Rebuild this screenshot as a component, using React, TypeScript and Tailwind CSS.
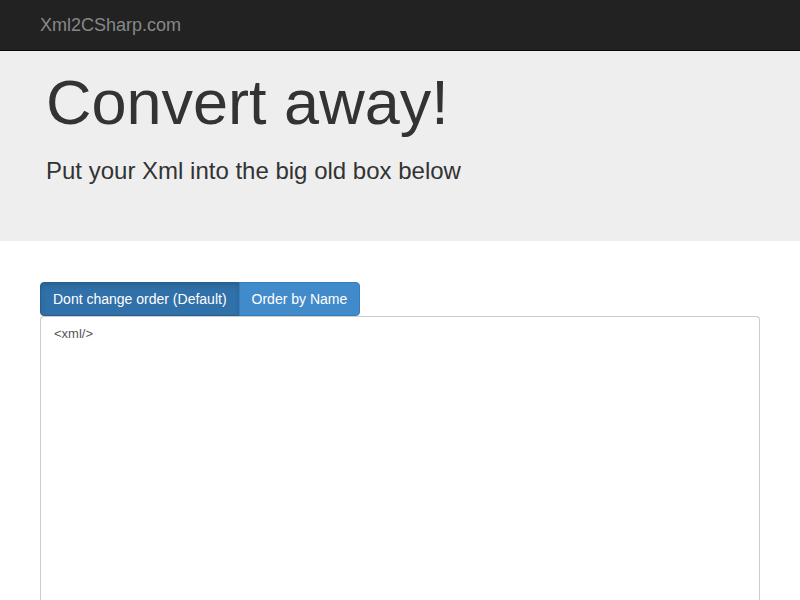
export default function App() {
  return (
    <div className="min-h-[600px] bg-white font-['Liberation_Sans',Arial,sans-serif] text-[#333]">
      <nav className="h-[51px] bg-[#222] border-b border-[#080808]">
        <div className="pl-[40px] pt-[15px] text-[18px] leading-[20px] text-[#888]">Xml2CSharp.com</div>
      </nav>
      <div className="h-[190px] bg-[#eee] pl-[46px] pt-[17px]">
        <h1 className="text-[63px] leading-[69px] text-[#333] m-0">Convert away!</h1>
        <p className="mt-[17px] text-[24px] leading-[34px] text-[#333]">Put your Xml into the big old box below</p>
      </div>
      <div className="px-[40px] pt-[41px]">
        <div className="flex">
          <button className="h-[34px] px-[12px] text-[14px] text-white bg-[#3071a9] border border-[#285e8e] rounded-l-[4px] shadow-[inset_0_3px_5px_rgba(0,0,0,0.125)]">
            Dont change order (Default)
          </button>
          <button className="h-[34px] px-[12px] -ml-px text-[14px] text-white bg-[#428bca] border border-[#357ebd] rounded-r-[4px]">
            Order by Name
          </button>
        </div>
        <textarea
          className="block w-[720px] h-[284px] border border-[#ccc] border-b-0 rounded-t-[4px] px-[13px] py-[8px] text-[13px] leading-[18px] text-[#555] font-['Liberation_Sans',Arial,sans-serif] resize-none outline-none"
          defaultValue="<xml/>"
        />
      </div>
    </div>
  );
}
